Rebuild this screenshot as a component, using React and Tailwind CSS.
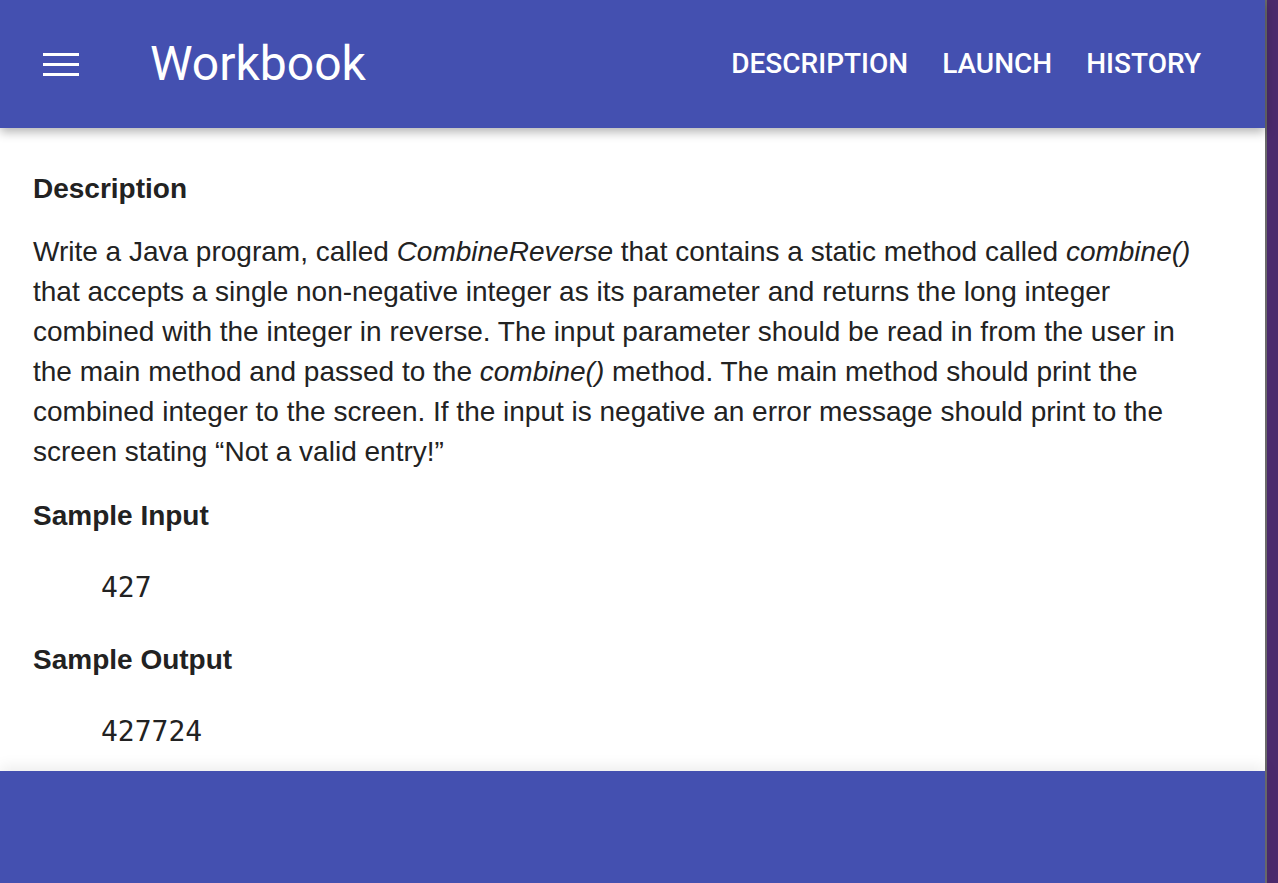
export default function App() {
  return (
    <div className="flex h-[883px] w-full overflow-hidden bg-white">
      <div className="relative flex w-[1265px] flex-col">
        <header className="relative z-10 flex h-[128px] shrink-0 items-center bg-[#4450b0] shadow-[0_4px_10px_rgba(0,0,0,0.3)]">
          <div className="ml-[43px] flex w-[36px] flex-col gap-[7px]">
            <span className="h-[3px] w-full bg-white"></span>
            <span className="h-[3px] w-full bg-white"></span>
            <span className="h-[3px] w-full bg-white"></span>
          </div>
          <h1 className="ml-[71px] font-['Roboto',sans-serif] text-[48px] leading-none text-white">
            Workbook
          </h1>
          <nav className="ml-auto mr-[64px] flex gap-[34px] font-['Roboto',sans-serif] text-[28px] font-medium text-white">
            <span>DESCRIPTION</span>
            <span>LAUNCH</span>
            <span>HISTORY</span>
          </nav>
        </header>

        <main className="flex-1 px-[33px] pt-[41px] font-['Liberation_Sans',Arial,sans-serif] text-[#222]">
          <h2 className="text-[28px] font-bold leading-[40px]">Description</h2>
          <p className="mt-[23px] max-w-[1175px] text-[28px] leading-[40px]">
            Write a Java program, called <i>CombineReverse</i> that contains a
            static method called <i>combine()</i> that accepts a single
            non-negative integer as its parameter and returns the long integer
            combined with the integer in reverse. The input parameter should be
            read in from the user in the main method and passed to the{" "}
            <i>combine()</i> method. The main method should print the combined
            integer to the screen. If the input is negative an error message
            should print to the screen stating “Not a valid entry!”
          </p>
          <h2 className="mt-[24px] text-[28px] font-bold leading-[40px]">Sample Input</h2>
          <pre className="mt-[32px] pl-[68px] font-['DejaVu_Sans_Mono',monospace] text-[28px] leading-[40px]">427</pre>
          <h2 className="mt-[32px] text-[28px] font-bold leading-[40px]">Sample Output</h2>
          <pre className="mt-[32px] pl-[68px] font-['DejaVu_Sans_Mono',monospace] text-[28px] leading-[40px]">427724</pre>
        </main>

        <footer className="relative h-[112px] shrink-0 bg-[#4450b0] shadow-[0_-4px_14px_rgba(0,0,0,0.08)]"></footer>
      </div>
      <div className="w-[2px] bg-[#6b6b6b]"></div>
      <div className="flex-1 bg-[#4b2a6c]"></div>
    </div>
  );
}
